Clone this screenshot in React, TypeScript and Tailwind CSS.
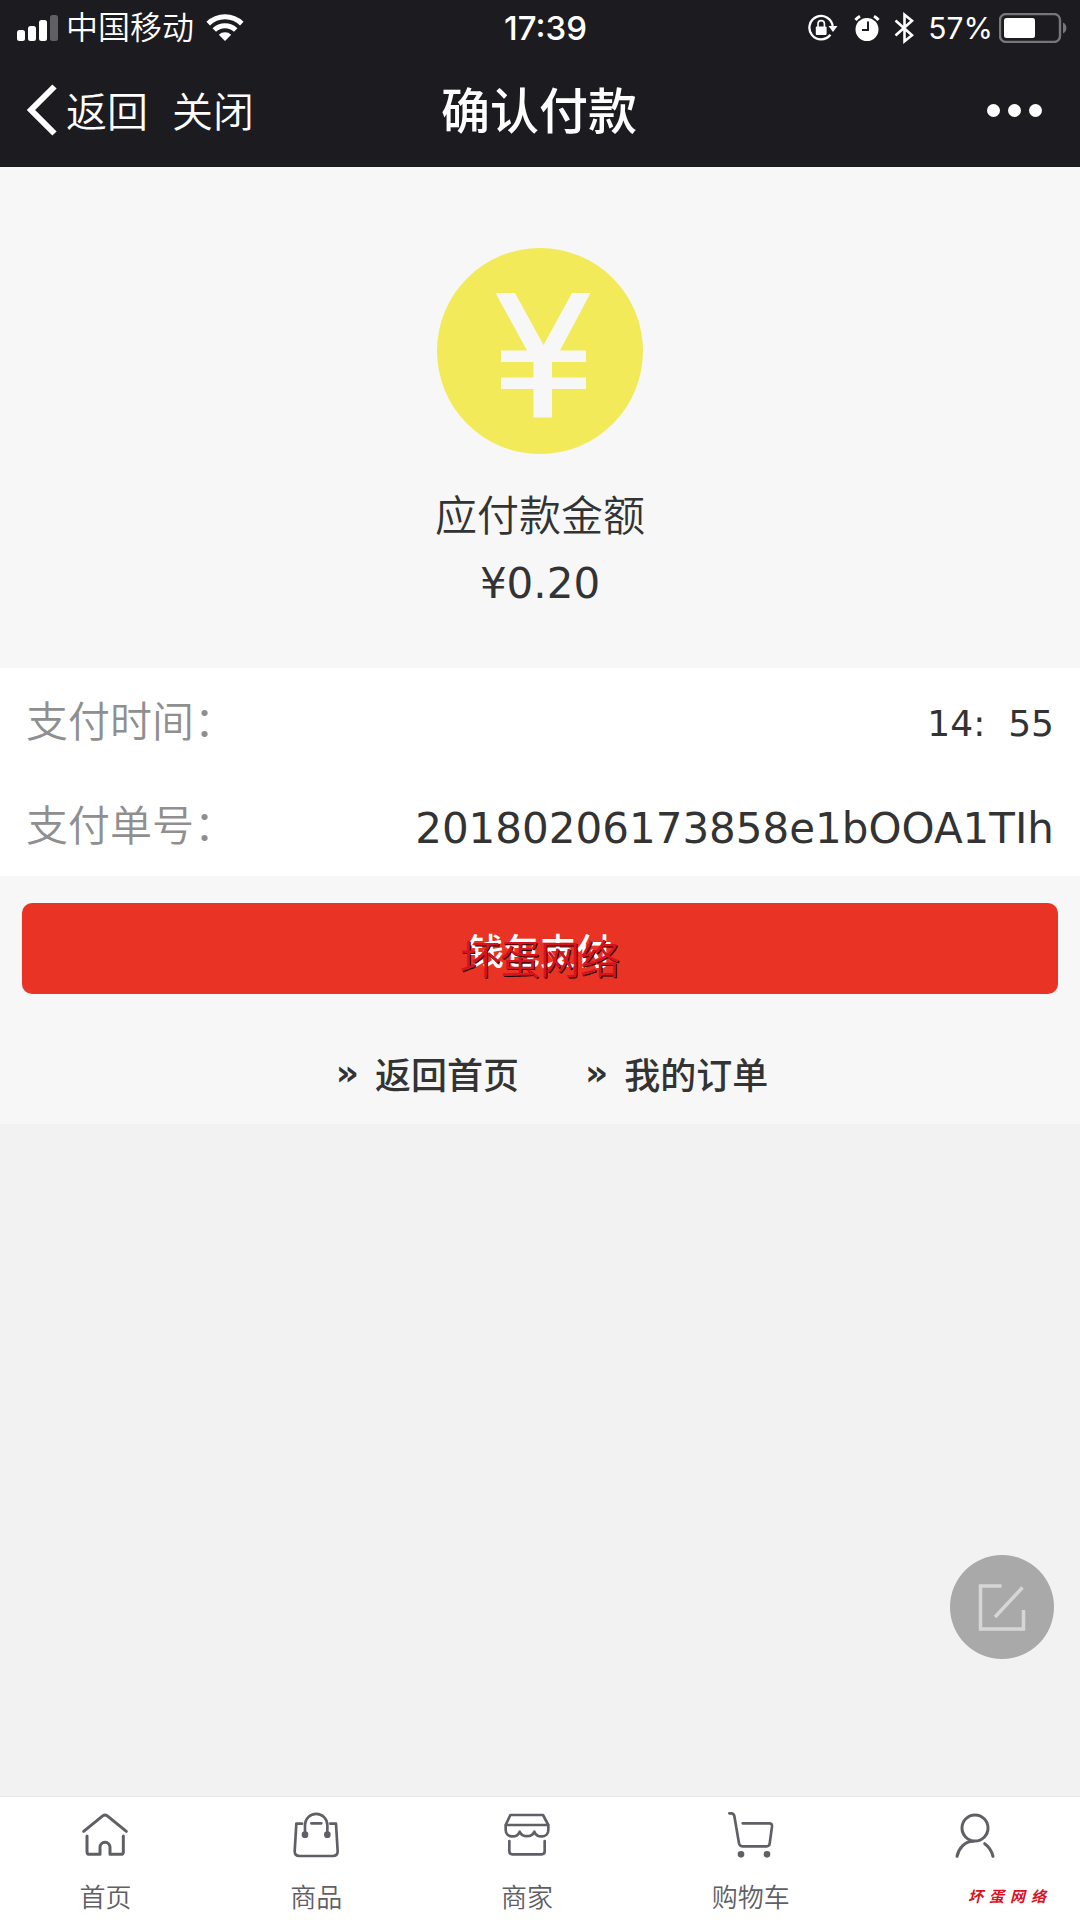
import type { ReactNode } from "react";

interface TabItem {
  label: string;
  icon: ReactNode;
}

function SignalIcon() {
  return (
    <svg className="h-7 w-11" viewBox="0 0 44 28" fill="currentColor">
      <rect x="1" y="16" width="8" height="11" rx="2.5" />
      <rect x="12" y="12" width="8" height="15" rx="2.5" />
      <rect x="23" y="6" width="8" height="21" rx="2.5" />
      <rect x="34" y="1" width="8" height="26" rx="2.5" opacity="0.3" />
    </svg>
  );
}

function WifiIcon() {
  return (
    <svg className="h-7 w-[38px]" viewBox="0 0 38 28">
      <g fill="none" stroke="currentColor" strokeWidth="5">
        <path d="M2.2 9.6a24 24 0 0 1 33.600 0" />
        <path d="M8.300 16a15.400 15.400 0 0 1 21.400 0" />
      </g>
      <path d="M12.800 20.800a9 9 0 0 1 12.400 0L19 27Z" fill="currentColor" />
    </svg>
  );
}

function RotationLockIcon() {
  return (
    <svg className="h-7 w-[30px]" viewBox="0 0 30 28">
      <path
        d="M22.400 20.800A11.700 11.700 0 1 1 24.700 12"
        fill="none"
        stroke="currentColor"
        strokeWidth="2.300"
      />
      <path d="M20.500 12h9l-4.500 6Z" fill="currentColor" />
      <rect x="7.800" y="12.500" width="10.800" height="8.500" rx="1" fill="currentColor" />
      <path d="M10 13V9.800a3.200 3.200 0 0 1 6.400 0V13" fill="none" stroke="currentColor" strokeWidth="1.600" />
    </svg>
  );
}

function AlarmIcon() {
  return (
    <svg className="h-7 w-[26px]" viewBox="0 0 26 28">
      <circle cx="13" cy="15.500" r="11.500" fill="currentColor" />
      <path d="M1.500 6A15 15 0 0 1 6 2.200M24.500 6A15 15 0 0 0 20 2.200" fill="none" stroke="currentColor" strokeWidth="3" />
      <path d="M14 7.500V16H8" fill="none" stroke="#1c1b20" strokeWidth="2" />
    </svg>
  );
}

function BluetoothIcon() {
  return (
    <svg className="h-8 w-5" viewBox="0 0 20 32" fill="none" stroke="currentColor" strokeWidth="2.600">
      <path d="M1.500 8.500 18 23.200l-7.500 6V2.800l7.500 6L1.500 23.500" />
    </svg>
  );
}

function BatteryIcon() {
  return (
    <svg className="h-[30px] w-[68px]" viewBox="0 0 68 30">
      <rect x="1" y="1" width="60" height="28" rx="6" fill="none" stroke="#77767b" strokeWidth="2.400" />
      <rect x="5" y="5" width="31" height="20" rx="2.500" fill="currentColor" />
      <path d="M64 9.500c4.500 2 4.500 9 0 11Z" fill="#77767b" />
    </svg>
  );
}

const tabIcon = "h-12 w-12";

const tabs: TabItem[] = [
  {
    label: "首页",
    icon: (
      <svg className={tabIcon} viewBox="244 94 144 144" fill="none" stroke="currentColor" strokeWidth="9" strokeLinecap="round" strokeLinejoin="round">
        <path d="M252 155l58-47q6-4 12 0l58 47" />
        <path d="M262 169v47q0 8 8 8h31v-21a15 15 0 0 1 30 0v21h32q8 0 8-8v-47" />
      </svg>
    ),
  },
  {
    label: "商品",
    icon: (
      <svg className={tabIcon} viewBox="875 94 144 144" fill="none" stroke="currentColor" strokeWidth="8" strokeLinecap="round" strokeLinejoin="round">
        <path d="M905 132h-17l-5 83q0 14 14 14h101q14 0 14-14l-5-83h-17" />
        <path d="M914 164v-28a33 33 0 0 1 67 0v28M933 131h30" />
        <circle cx="914" cy="165" r="6" fill="currentColor" />
        <circle cx="981" cy="165" r="6" fill="currentColor" />
      </svg>
    ),
  },
  {
    label: "商家",
    icon: (
      <svg className={tabIcon} viewBox="306 94 144 144" fill="none" stroke="currentColor" strokeWidth="8" strokeLinecap="round" strokeLinejoin="round">
        <path d="M328 106h98l16 30v14c0 26-34 26-42 6-8 18-36 18-44 0-8 20-42 20-42-6v-14Z" />
        <path d="M315 136h126" />
        <path d="M325 184v31q0 9 9 9h88q9 0 9-9v-31" />
      </svg>
    ),
  },
  {
    label: "购物车",
    icon: (
      <svg className={tabIcon} viewBox="980 94 144 144" fill="none" stroke="currentColor" strokeWidth="8" strokeLinecap="round" strokeLinejoin="round">
        <path d="M987 101h6q7 0 9 8l14 82q2 9 10 9h73q8 0 9-8l7-51q1-10-8-10h-80" />
        <circle cx="1022" cy="224" r="6" fill="currentColor" />
        <circle cx="1100" cy="224" r="6" fill="currentColor" />
      </svg>
    ),
  },
];

function StatusBar() {
  return (
    <div className="grid h-14 grid-cols-[1fr_auto_1fr] items-center pr-[13px] pl-4 font-[Inter,'Noto_Sans_CJK_SC',sans-serif] text-[30px] leading-8">
      <div className="flex items-center">
        <SignalIcon />
        <span className="ml-1.5 text-[32px] font-[350]">中国移动</span>
        <span className="ml-3">
          <WifiIcon />
        </span>
      </div>
      <span className="pl-2 text-[33px] font-medium">17:39</span>
      <div className="flex items-center justify-end">
        <RotationLockIcon />
        <span className="ml-4">
          <AlarmIcon />
        </span>
        <span className="ml-3.5">
          <BluetoothIcon />
        </span>
        <span className="ml-3.5">57%</span>
        <span className="ml-1.5">
          <BatteryIcon />
        </span>
      </div>
    </div>
  );
}

function NavBar() {
  return (
    <div className="grid h-[111px] grid-cols-[1fr_auto_1fr] items-center pr-[29px] pb-1 pl-[27px]">
      <div className="flex items-center text-[41px] font-[350]">
        <button type="button" className="flex items-center gap-[9px]">
          <svg className="h-[52px] w-[30px]" viewBox="0 0 30 52" fill="none" stroke="currentColor" strokeWidth="6">
            <path d="M27.500 2.500 4 26l23.500 23.500" />
          </svg>
          返回
        </button>
        <button type="button" className="ml-6">
          关闭
        </button>
      </div>
      <h1 className="pb-1 text-[49px] font-medium">确认付款</h1>
      <button type="button" aria-label="更多" className="mr-[9px] flex gap-2 justify-self-end pt-0.5">
        <span className="h-[13px] w-[13px] rounded-full bg-white" />
        <span className="h-[13px] w-[13px] rounded-full bg-white" />
        <span className="h-[13px] w-[13px] rounded-full bg-white" />
      </button>
    </div>
  );
}

function YenBadge() {
  return (
    <svg className="h-[206px] w-[206px]" viewBox="0 0 206 206">
      <circle cx="103" cy="103" r="103" fill="#f2ea58" />
      <path
        d="M58.500 45H78l28.500 52L135 45h18.500L123 102.500h26V114h-34v15.500h34V141h-34v28.500H96.500V141H64v-11.500h32.500V114H64v-11.500h26Z"
        fill="#f7f7f7"
      />
    </svg>
  );
}

export default function App() {
  return (
    <div className="flex min-h-screen flex-col bg-[#f2f2f2] font-['DejaVu_Sans','Noto_Sans_CJK_SC',sans-serif] text-[#333333]">
      <header className="bg-[#1c1b20] font-['Noto_Sans_CJK_SC',sans-serif] text-white">
        <StatusBar />
        <NavBar />
      </header>

      <main className="bg-[#f7f7f7]">
        {/* Amount due */}
        <section className="flex flex-col items-center pt-[81px] pb-[51px] text-[42px] leading-[67px]">
          <YenBadge />
          <p className="mt-[25px] font-['Noto_Sans_CJK_SC',sans-serif] font-[350]">应付款金额</p>
          <p className="mt-1">¥0.20</p>
        </section>

        {/* Payment details */}
        <dl className="bg-white px-[26px] text-[42px]">
          <div className="flex h-[104px] items-center justify-between">
            <dt className="pb-1 font-['Noto_Sans_CJK_SC',sans-serif] font-[350] text-[#8f8f8f]">支付时间：</dt>
            <dd className="pt-2 text-[36px]">14:&nbsp; 55</dd>
          </div>
          <div className="flex h-[104px] items-center justify-between">
            <dt className="pb-1 font-['Noto_Sans_CJK_SC',sans-serif] font-[350] text-[#8f8f8f]">支付单号：</dt>
            <dd className="pt-2">20180206173858e1bOOA1TIh</dd>
          </div>
        </dl>

        <div className="relative px-[22px] pt-[27px] font-['Noto_Sans_CJK_SC',sans-serif]">
          <button type="button" className="block h-[91px] w-full rounded-[10px] bg-[#e93325] text-[36px] font-medium text-white">
            钱包支付
          </button>
          <span className="pointer-events-none absolute inset-x-0 top-[51px] text-center text-[40px] leading-[60px] font-[350] text-[#d8121f] [text-shadow:1px_1px_0_#200000]">
            坏蛋网络
          </span>
        </div>

        <nav className="flex justify-center gap-[66px] pt-[52px] pb-6 pl-6 font-['Noto_Sans_CJK_SC',sans-serif] text-[36px] leading-[54px] font-medium">
          <a href="#home" className="flex gap-4">
            <span className="font-['DejaVu_Sans',sans-serif] font-bold">»</span>返回首页
          </a>
          <a href="#orders" className="flex gap-4">
            <span className="font-['DejaVu_Sans',sans-serif] font-bold">»</span>我的订单
          </a>
        </nav>
      </main>

      <button
        type="button"
        aria-label="反馈"
        className="fixed right-[26px] bottom-[261px] flex h-[104px] w-[104px] items-center justify-center rounded-full bg-[#a9a9a9]"
      >
        <svg className="h-12 w-12" viewBox="0 0 48 48" fill="none" stroke="#d6d6d6" strokeWidth="3.500">
          <path d="M23.500 3H2.500v43h43V27" />
          <path d="M44.500 4.500 17 34" />
        </svg>
      </button>

      <footer className="mt-auto flex border-t border-[#e8e8e8] bg-white font-['Noto_Sans_CJK_SC',sans-serif] text-[26px] leading-9 font-[350] text-[#5f6066]">
        {tabs.map((tab) => (
          <a key={tab.label} href="#tab" className="flex flex-auto flex-col items-center gap-[19px] pt-[14px] pb-1.5">
            {tab.icon}
            {tab.label}
          </a>
        ))}
        <a href="#mine" aria-label="我的" className="relative flex flex-auto flex-col items-center px-0.5 pt-[14px]">
          <svg className={tabIcon} viewBox="449 94 144 144" fill="none" stroke="currentColor" strokeWidth="9" strokeLinecap="round">
            <circle cx="521" cy="145" r="39" />
            <path d="M467 230c6-26 24-44 48-45M550 192q19 13 25 38" />
          </svg>
          <span className="absolute right-[34px] bottom-[14px] flex gap-[6px] text-[15px] leading-5 font-bold text-[#d8121f] italic">
            <span>坏</span>
            <span>蛋</span>
            <span>网</span>
            <span>络</span>
          </span>
        </a>
      </footer>
    </div>
  );
}
